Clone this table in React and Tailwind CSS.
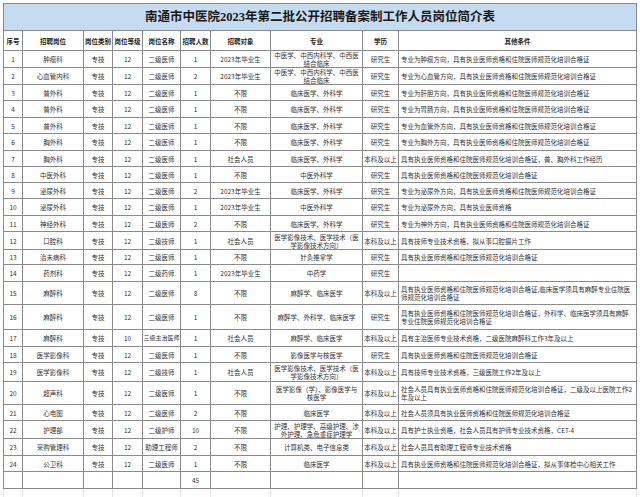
// App.jsx — 南通市中医院 2023 招聘岗位简介表

const rows = [
  { n: '1', post: '肿瘤科', grade: '12', name: '二级医师', num: '1', target: '2023年毕业生', major: '中医学、中西内科学、中西医结合临床', edu: '研究生', other: '专业为肿瘤方向，具有执业医师资格和住院医师规范化培训合格证', h: 'h-[17px]' },
  { n: '2', post: '心血管内科', grade: '12', name: '二级医师', num: '2', target: '2023年毕业生', major: '中医学、中西内科学、中西医结合临床', edu: '研究生', other: '专业为心血管方向，具有执业医师资格和住院医师规范化培训合格证', h: 'h-[17px]' },
  { n: '3', post: '普外科', grade: '12', name: '二级医师', num: '1', target: '不限', major: '临床医学、外科学', edu: '研究生', other: '专业为肝胆方向，具有执业医师资格和住院医师规范化培训合格证', h: 'h-[16px]' },
  { n: '4', post: '普外科', grade: '12', name: '二级医师', num: '1', target: '不限', major: '临床医学、外科学', edu: '研究生', other: '专业为胃肠方向，具有执业医师资格和住院医师规范化培训合格证', h: 'h-[17px]' },
  { n: '5', post: '普外科', grade: '12', name: '二级医师', num: '1', target: '不限', major: '临床医学、外科学', edu: '研究生', other: '专业为血管外方向，具有执业医师资格和住院医师规范化培训合格证', h: 'h-[16px]' },
  { n: '6', post: '胸外科', grade: '12', name: '二级医师', num: '1', target: '不限', major: '临床医学、外科学', edu: '研究生', other: '专业为胸外方向，具有执业医师资格和住院医师规范化培训合格证', h: 'h-[17px]' },
  { n: '7', post: '胸外科', grade: '12', name: '二级医师', num: '1', target: '社会人员', major: '临床医学、外科学', edu: '本科及以上', other: '具有执业医师资格和住院医师规范化培训合格证，普、胸外科工作经历', h: 'h-[16px]' },
  { n: '8', post: '中医外科', grade: '12', name: '二级医师', num: '1', target: '不限', major: '中医外科学', edu: '研究生', other: '具有执业医师资格和住院医师规范化培训合格证', h: 'h-[16px]' },
  { n: '9', post: '泌尿外科', grade: '12', name: '二级医师', num: '2', target: '2023年毕业生', major: '临床医学、外科学', edu: '研究生', other: '专业为泌尿外方向，具有执业医师资格和住院医师规范化培训合格证', h: 'h-[16px]' },
  { n: '10', post: '泌尿外科', grade: '12', name: '二级医师', num: '1', target: '2023年毕业生', major: '中医外科学', edu: '研究生', other: '专业为泌尿外方向，具有执业医师资格', h: 'h-[17px]' },
  { n: '11', post: '神经外科', grade: '12', name: '二级医师', num: '2', target: '不限', major: '临床医学、外科学', edu: '研究生', other: '专业为神外方向，具有执业医师资格和住院医师规范化培训合格证', h: 'h-[16px]' },
  { n: '12', post: '口腔科', grade: '12', name: '二级技师', num: '1', target: '社会人员', major: '医学影像技术、医学技术（医学影像技术方向）', edu: '本科及以上', other: '具有技师专业技术资格，拟从事口腔摄片工作', h: 'h-[18px]' },
  { n: '13', post: '治未病科', grade: '12', name: '二级医师', num: '1', target: '不限', major: '针灸推拿学', edu: '研究生', other: '具有执业医师资格和住院医师规范化培训合格证', h: 'h-[15px]' },
  { n: '14', post: '药剂科', grade: '12', name: '二级药师', num: '1', target: '2023年毕业生', major: '中药学', edu: '研究生', other: '', h: 'h-[17px]' },
  { n: '15', post: '麻醉科', grade: '12', name: '二级医师', num: '8', target: '不限', major: '麻醉学、临床医学', edu: '本科及以上', other: '具有执业医师资格和住院医师规范化培训合格证,临床医学须具有麻醉专业住院医师规范化培训合格证', h: 'h-[23px]' },
  { n: '16', post: '麻醉科', grade: '12', name: '二级医师', num: '1', target: '不限', major: '麻醉学、外科学、临床医学', edu: '研究生', other: '具有执业医师资格和住院医师规范化培训合格证，外科学、临床医学须具有麻醉专业住院医师规范化培训合格证', h: 'h-[25px]' },
  { n: '17', post: '麻醉科', grade: '10', name: '三级主治医师', num: '1', target: '社会人员', major: '麻醉学、临床医学', edu: '本科及以上', other: '具有主治医师专业技术资格，二级医院麻醉科工作3年及以上', h: 'h-[17px]', small: true },
  { n: '18', post: '医学影像科', grade: '12', name: '二级医师', num: '1', target: '不限', major: '影像医学与核医学', edu: '研究生', other: '具有执业医师资格和住院医师规范化培训合格证', h: 'h-[16px]' },
  { n: '19', post: '医学影像科', grade: '12', name: '二级技师', num: '1', target: '社会人员', major: '医学影像技术、医学技术（医学影像技术方向）', edu: '本科及以上', other: '具有技师专业技术资格，三级医院工作2年及以上', h: 'h-[19px]' },
  { n: '20', post: '超声科', grade: '12', name: '二级医师', num: '1', target: '不限', major: '医学影像（学）、影像医学与核医学', edu: '本科及以上', other: '社会人员具有执业医师资格和住院医师规范化培训合格证，二级及以上医院工作2年及以上', h: 'h-[23px]' },
  { n: '21', post: '心电图', grade: '12', name: '二级医师', num: '2', target: '不限', major: '临床医学', edu: '本科及以上', other: '社会人员须具有执业医师资格和住院医师规范化培训合格证', h: 'h-[16px]' },
  { n: '22', post: '护理部', grade: '12', name: '二级护师', num: '10', target: '不限', major: '护理、护理学、高级护理、涉外护理、急危重症护理学', edu: '本科及以上', other: '具有护士执业资格，社会人员具有护师专业技术资格，CET-4', h: 'h-[18px]' },
  { n: '23', post: '采购管理科', grade: '12', name: '助理工程师', num: '2', target: '不限', major: '计算机类、电子信息类', edu: '本科及以上', other: '社会人员具有助理工程师专业技术资格', h: 'h-[17px]' },
  { n: '24', post: '公卫科', grade: '12', name: '二级医师', num: '1', target: '不限', major: '临床医学', edu: '本科及以上', other: '具有执业医师资格和住院医师规范化培训合格证，拟从事体检中心相关工作', h: 'h-[16px]' },
];

const headers = ['序号', '招聘岗位', '岗位类别', '岗位等级', '岗位名称', '招聘人数', '招聘对象', '专业', '学历', '其他条件'];

const td = 'border border-[#8a8a8a] px-[1px] text-center align-middle';

export default function App() {
  return (
    <div className="w-[640px] h-[497px] overflow-hidden bg-white pt-[3px] pl-[3px] font-['Noto_Sans_CJK_SC',sans-serif] text-[6.5px] leading-[8px] text-[#333333]">
      <table className="w-[633px] table-fixed border-collapse">
        <colgroup>
          <col className="w-[19px]" />
          <col className="w-[61px]" />
          <col className="w-[29px]" />
          <col className="w-[30px]" />
          <col className="w-[38px]" />
          <col className="w-[30px]" />
          <col className="w-[60px]" />
          <col className="w-[92px]" />
          <col className="w-[36px]" />
          <col className="w-[238px]" />
        </colgroup>
        <tbody>
          <tr className="h-[27px]">
            <td colSpan={10} className="border border-[#8a8a8a] bg-[#c5dbef] text-center align-middle font-['Liberation_Serif','Noto_Sans_CJK_SC',serif] text-[12.5px] leading-[16px] font-bold text-[#1a1a1a]">
              南通市中医院2023年第二批公开招聘备案制工作人员岗位简介表
            </td>
          </tr>
          <tr className="h-[20px]">
            {headers.map((h) => (
              <td key={h} className={`${td} font-bold whitespace-nowrap overflow-hidden text-[#222222]`}>{h}</td>
            ))}
          </tr>
          {rows.map((r) => (
            <tr key={r.n} className={r.h}>
              <td className={td}>{r.n}</td>
              <td className={td}>{r.post}</td>
              <td className={td}>专技</td>
              <td className={td}>{r.grade}</td>
              <td className={r.small ? 'border border-[#8a8a8a] px-0 text-center align-middle whitespace-nowrap text-[6px]' : `${td} whitespace-nowrap`}>{r.name}</td>
              <td className={td}>{r.num}</td>
              <td className={`${td} whitespace-nowrap`}>{r.target}</td>
              <td className={`${td} px-[2px]`}>{r.major}</td>
              <td className={`${td} whitespace-nowrap overflow-hidden`}>{r.edu}</td>
              <td className="border border-[#8a8a8a] pl-[2px] pr-[2px] text-left align-middle">{r.other}</td>
            </tr>
          ))}
          <tr className="h-[17px]">
            <td className={td}></td>
            <td className={td}></td>
            <td className={td}></td>
            <td className={td}></td>
            <td className={td}></td>
            <td className={td}>45</td>
            <td className={td}></td>
            <td className={td}></td>
            <td className={td}></td>
            <td className={td}></td>
          </tr>
          <tr className="h-[12px]">
            {headers.map((h) => (
              <td key={h} className="border-x border-[#e3e6ea]"></td>
            ))}
          </tr>
        </tbody>
      </table>
    </div>
  );
}
